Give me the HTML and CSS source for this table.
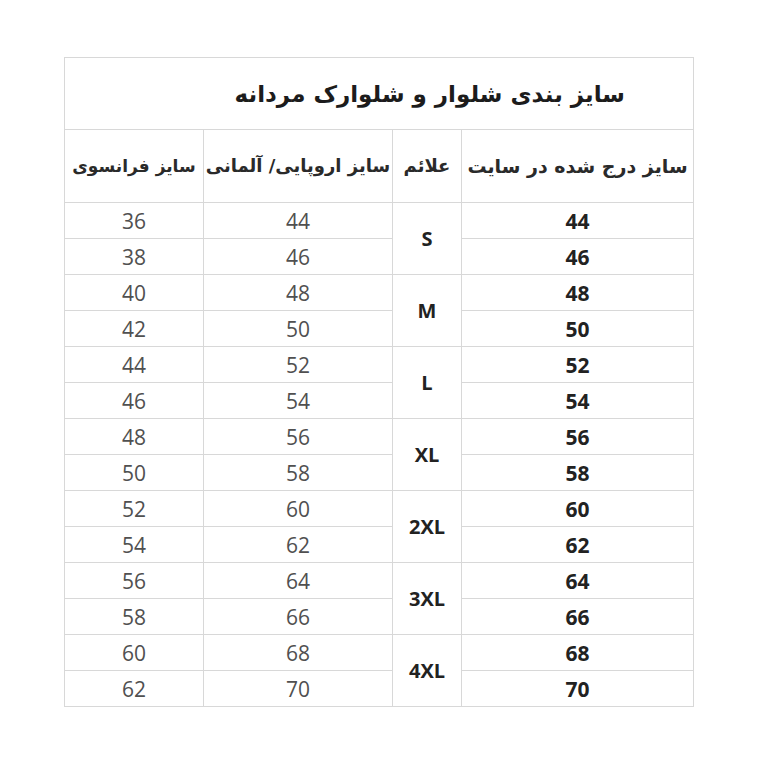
FILE: index.html
```html
<!DOCTYPE html>
<html lang="fa" dir="rtl">
<head>
<meta charset="utf-8">
<title>سایز بندی شلوار و شلوارک مردانه</title>
<link rel="stylesheet" href="styles.css">
</head>
<body>
<div class="page">
<table class="size-table">
<colgroup>
<col class="c-site"><col class="c-label"><col class="c-eu"><col class="c-fr">
</colgroup>
<thead>
<tr class="title-row"><th colspan="4" class="title">سایز بندی شلوار و شلوارک مردانه</th></tr>
<tr class="head-row">
<th class="h-site">سایز درج شده در سایت</th>
<th>علائم</th>
<th class="h-eu">سایز اروپایی/ آلمانی</th>
<th class="h-fr">سایز فرانسوی</th>
</tr>
</thead>
<tbody>
<tr><td class="site">44</td><td class="label" rowspan="2">S</td><td class="num">44</td><td class="num">36</td></tr>
<tr><td class="site">46</td><td class="num">46</td><td class="num">38</td></tr>
<tr><td class="site">48</td><td class="label" rowspan="2">M</td><td class="num">48</td><td class="num">40</td></tr>
<tr><td class="site">50</td><td class="num">50</td><td class="num">42</td></tr>
<tr><td class="site">52</td><td class="label" rowspan="2">L</td><td class="num">52</td><td class="num">44</td></tr>
<tr><td class="site">54</td><td class="num">54</td><td class="num">46</td></tr>
<tr><td class="site">56</td><td class="label" rowspan="2">XL</td><td class="num">56</td><td class="num">48</td></tr>
<tr><td class="site">58</td><td class="num">58</td><td class="num">50</td></tr>
<tr><td class="site">60</td><td class="label" rowspan="2">2XL</td><td class="num">60</td><td class="num">52</td></tr>
<tr><td class="site">62</td><td class="num">62</td><td class="num">54</td></tr>
<tr><td class="site">64</td><td class="label" rowspan="2">3XL</td><td class="num">64</td><td class="num">56</td></tr>
<tr><td class="site">66</td><td class="num">66</td><td class="num">58</td></tr>
<tr><td class="site">68</td><td class="label" rowspan="2">4XL</td><td class="num">68</td><td class="num">60</td></tr>
<tr><td class="site">70</td><td class="num">70</td><td class="num">62</td></tr>
</tbody>
</table>
</div>
</body>
</html>
```
FILE: styles.css
```css
html, body {
  margin: 0;
  padding: 0;
  background: #ffffff;
}
.page {
  width: 762px;
  height: 762px;
  box-sizing: border-box;
  padding: 57px 68px 0 0;
  display: flex;
  justify-content: flex-end;
  align-items: flex-start;
  direction: ltr;
}
.size-table {
  direction: rtl;
  border-collapse: collapse;
  table-layout: fixed;
  width: 629px;
  font-family: "DejaVu Sans", "Noto Sans", sans-serif;
  line-height: 1;
}
.c-site { width: 232px; }
.c-label { width: 69px; }
.c-eu { width: 189px; }
.c-fr { width: 139px; }
.size-table th,
.size-table td {
  border: 1px solid #d8d8d8;
  padding: 0;
  text-align: center;
  vertical-align: middle;
  line-height: 22px;
}
.title-row th { height: 71px; }
.title {
  text-align: right !important;
  padding-right: 68px !important;
  font-size: 23px;
  font-weight: bold;
  color: #1c1c1c;
}
.head-row th {
  height: 72px;
  font-size: 18px;
  font-weight: bold;
  color: #2a2a2a;
  white-space: nowrap;
}
.head-row .h-site { font-size: 19px; }
.head-row .h-fr { font-size: 17px; }
tbody td { height: 35px; }
.num {
  font-family: "Open Sans", "Liberation Sans", sans-serif;
  font-size: 21px;
  color: #505050;
  padding-top: 2px;
}
.site {
  font-family: "Open Sans", "Liberation Sans", sans-serif;
  font-size: 21px;
  font-weight: bold;
  color: #222;
  padding-top: 2px;
}
.label {
  font-family: "Open Sans", "Liberation Sans", sans-serif;
  font-size: 20px;
  font-weight: bold;
  color: #222;
}
```
